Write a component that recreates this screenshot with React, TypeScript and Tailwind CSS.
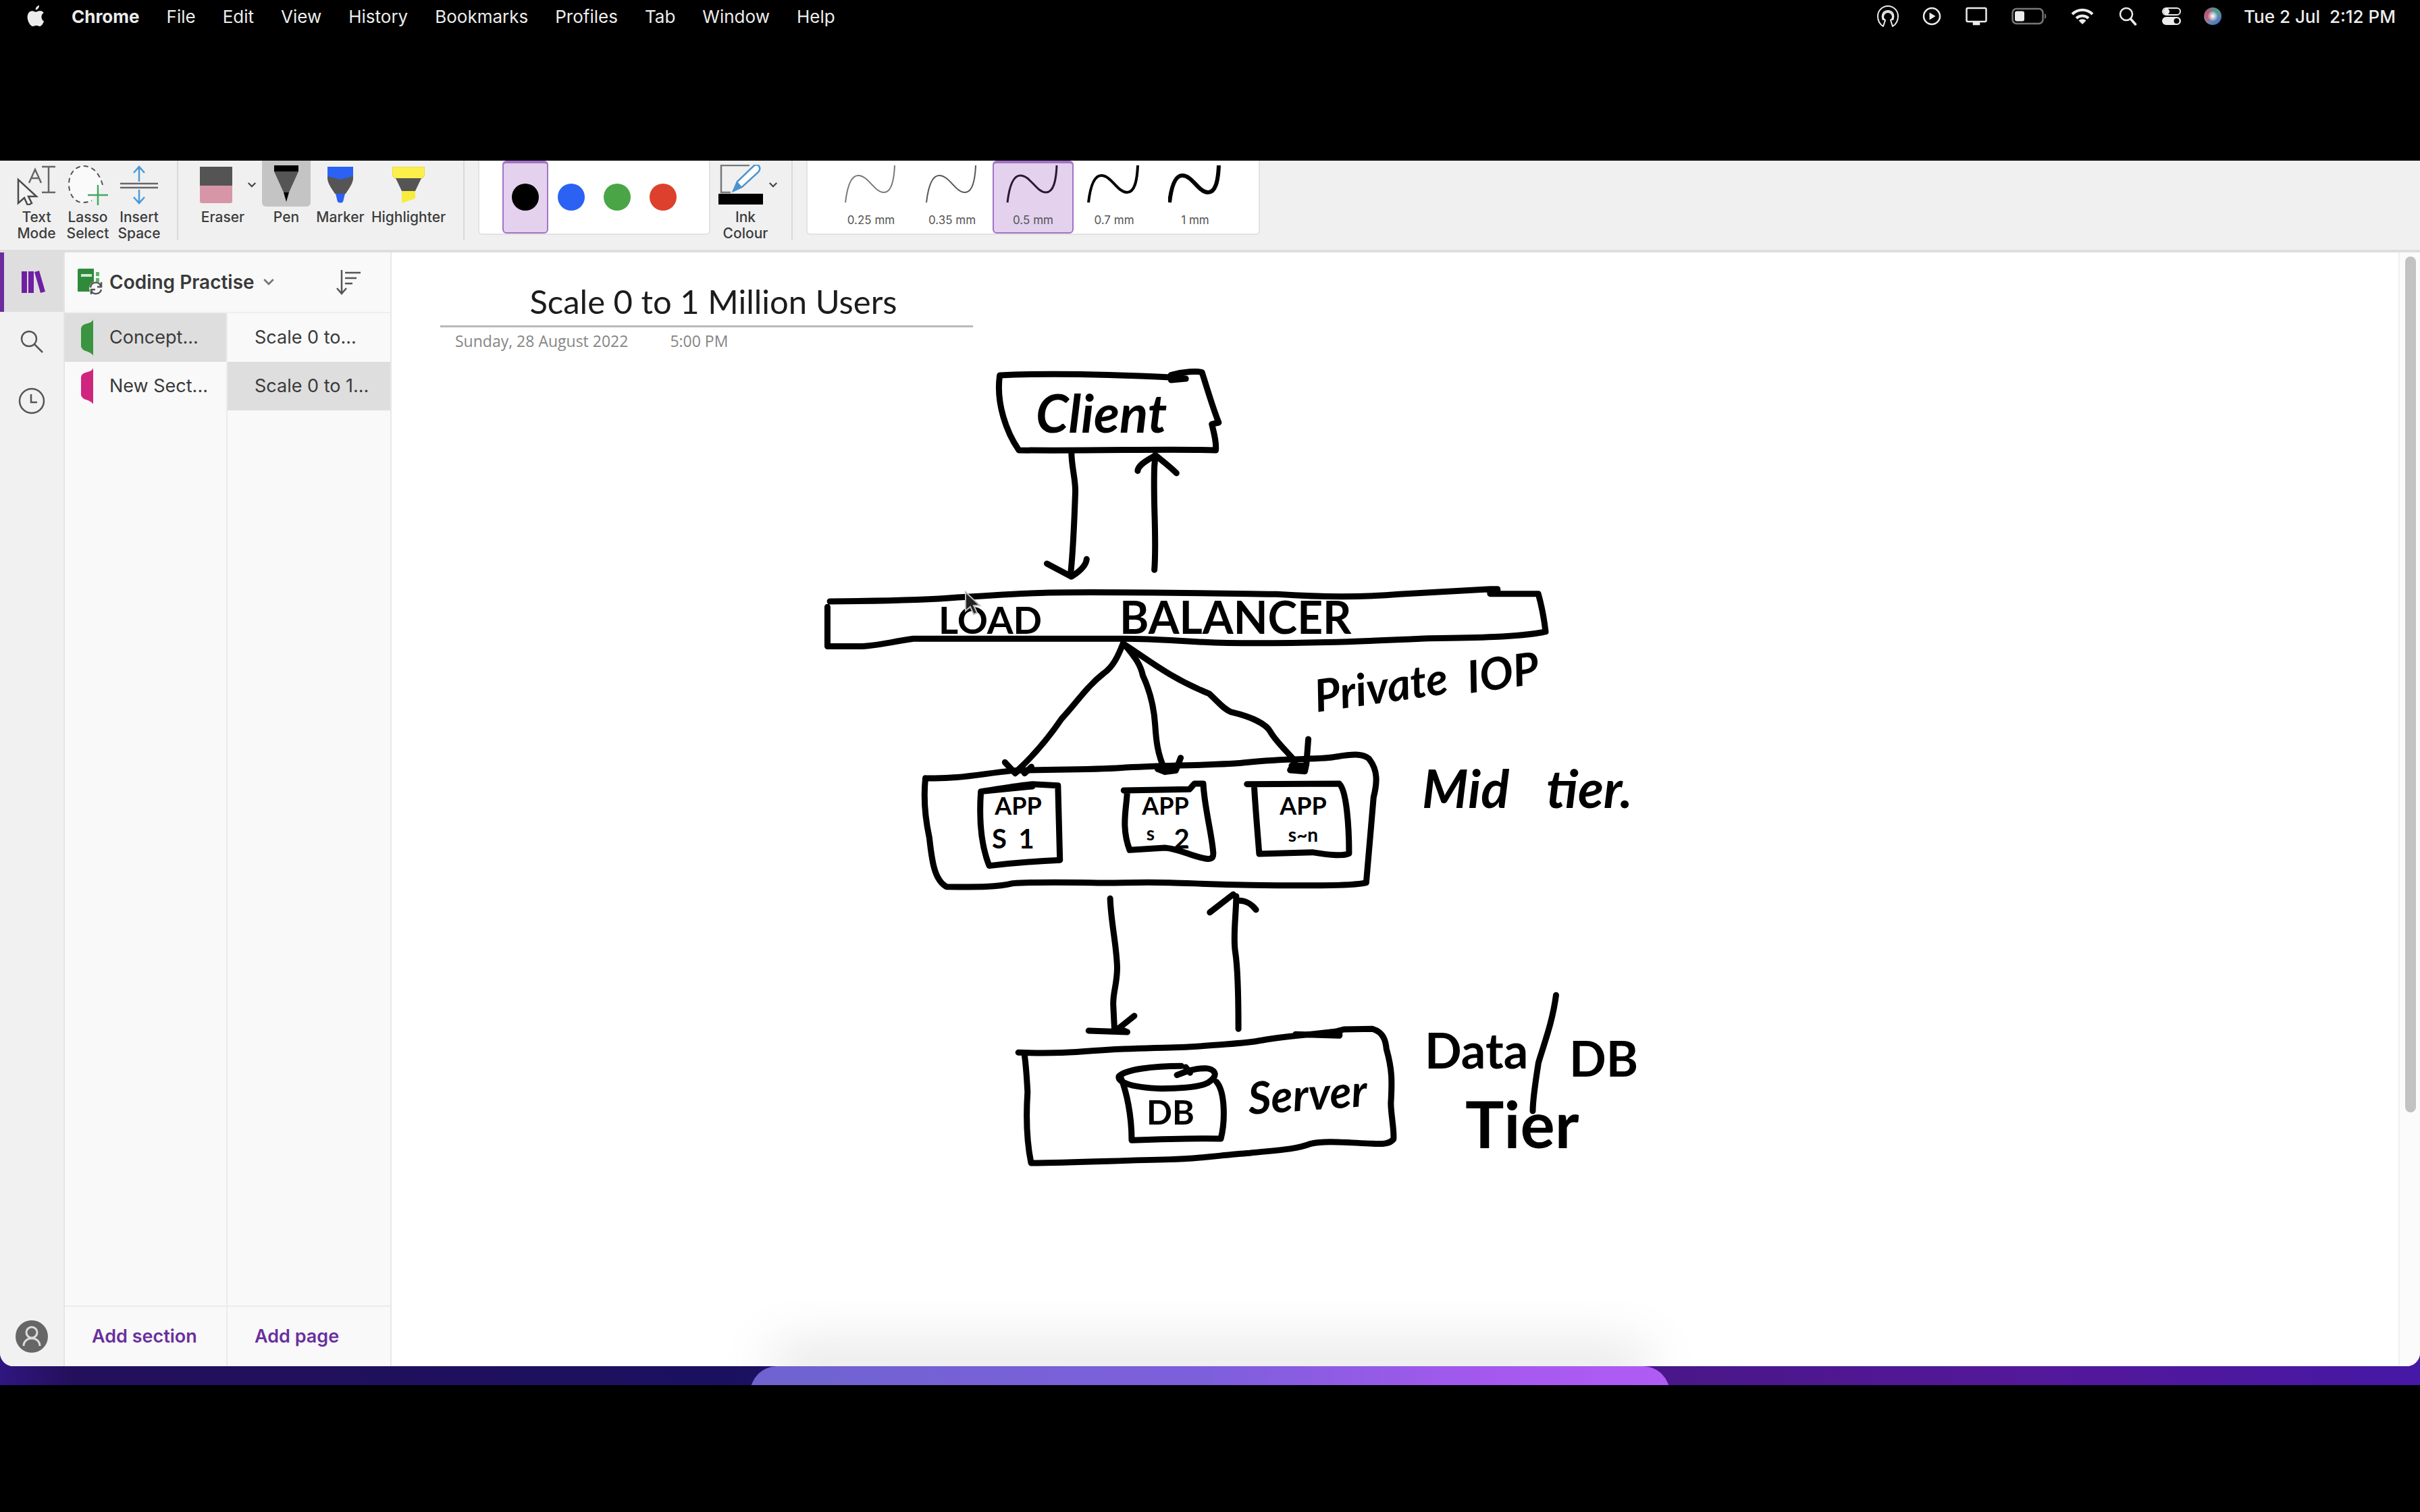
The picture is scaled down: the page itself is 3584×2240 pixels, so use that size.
import type { ReactNode } from "react";

const menus = ["File", "Edit", "View", "History", "Bookmarks", "Profiles", "Tab", "Window", "Help"];

const inkColours = [
  { name: "Black", className: "bg-black" },
  { name: "Blue", className: "bg-[#2b62f3]" },
  { name: "Green", className: "bg-[#49a546]" },
  { name: "Red", className: "bg-[#dd402c]" },
];

const nibs = [
  { label: "0.25 mm", weight: 2, colour: "#777" },
  { label: "0.35 mm", weight: 2, colour: "#555" },
  { label: "0.5 mm", weight: 3, colour: "#2a1a33" },
  { label: "0.7 mm", weight: 4, colour: "#000" },
  { label: "1 mm", weight: 6, colour: "#000" },
];

const sections = [
  { label: "Concept...", fill: "#3a9440", selected: true },
  { label: "New Sect...", fill: "#d0257f", selected: false },
];

const pages = [
  { label: "Scale 0 to...", selected: false },
  { label: "Scale 0 to 1...", selected: true },
];

function AppleLogo() {
  return (
    <svg viewBox="0 0 26 32" className="h-8 w-[26px]" fill="#ececec" aria-hidden="true">
      <path d="M18 0c.3 3-2.400 6.600-5.300 6.600C12.300 3.600 15.200.4 18 0z" />
      <path d="M25 23.500c-1.400 3.700-3.600 7.500-6.200 7.500-1.900 0-2.700-1.200-5-1.200s-3.200 1.200-5 1.200C5.200 31 .6 23.800.6 17.200c0-5.800 3.600-9 7.200-9 2.200 0 4 1.500 5.500 1.500 1.400 0 3.500-1.600 6.200-1.600 1.700 0 3.900.9 5.200 2.800-4.800 2.900-3.900 10.300.3 12.600z" />
    </svg>
  );
}

function MenuBar() {
  return (
    <header className="flex h-12 items-center justify-between pl-10 pr-9 text-[26px] text-[#ececec]">
      <nav className="flex items-center gap-10" aria-label="Menu bar">
        <button aria-label="Apple menu"><AppleLogo /></button>
        <button className="font-bold">Chrome</button>
        {menus.map((m) => (
          <button key={m}>{m}</button>
        ))}
      </nav>
      <div className="flex items-center">
        <button aria-label="Hotspot" className="mr-[34px]">
          <svg viewBox="0 0 34 34" className="size-[34px]" fill="none" stroke="#ececec" strokeWidth="2" strokeLinejoin="round">
            <path d="M10 32C5 29 2 24 2 17a15 15 0 0 1 30 0c0 7-3 12-8 15l-3-9c2-1 3-3 3-5a7 7 0 0 0-14 0c0 2 1 4 3 5z" />
            <path d="M10 23C6 13 12 9 17 9s11 4 7 14" />
          </svg>
        </button>
        <button aria-label="Now playing" className="mr-9">
          <svg viewBox="0 0 28 28" className="size-7" fill="none" stroke="#ececec" strokeWidth="2.500">
            <circle cx="14" cy="14" r="12" />
            <path d="M10.500 8.500v11l9-5.500z" fill="#ececec" stroke="none" />
          </svg>
        </button>
        <button aria-label="Display" className="mr-9">
          <svg viewBox="0 0 32 28" className="h-7 w-8" fill="none" stroke="#ececec" strokeWidth="2.500">
            <rect x="1.500" y="2" width="29" height="20" rx="2" />
            <path d="M12 23h8v3h-8z" fill="#ececec" />
          </svg>
        </button>
        <button aria-label="Battery" className="mr-9">
          <svg viewBox="0 0 52 28" className="h-7 w-[52px]" fill="none">
            <rect x="1.500" y="3" width="45" height="22" rx="6" stroke="#777" strokeWidth="2.500" />
            <rect x="5" y="6.500" width="14" height="15" rx="3" fill="#ececec" />
            <path d="M49 10c3 1 3 7 0 8z" fill="#777" />
          </svg>
        </button>
        <button aria-label="Wi-Fi" className="mr-9">
          <svg viewBox="0 0 34 26" className="h-[26px] w-[34px]" fill="none" stroke="#ececec" strokeWidth="4">
            <path d="M2 10a21 21 0 0 1 30 0" />
            <path d="M8 16a13 13 0 0 1 18 0" />
            <path d="M11.500 19.500a8 8 0 0 1 11 0L17 25z" fill="#ececec" stroke="none" />
          </svg>
        </button>
        <button aria-label="Spotlight" className="mr-9">
          <svg viewBox="0 0 28 28" className="size-7" fill="none" stroke="#ececec" strokeWidth="2.500" strokeLinecap="round">
            <circle cx="12" cy="11" r="9" />
            <path d="M18.500 18l7 8" strokeWidth="3.500" />
          </svg>
        </button>
        <button aria-label="Control centre" className="mr-8">
          <svg viewBox="0 0 30 28" className="h-7 w-[30px]" fill="none" stroke="#ececec" strokeWidth="2">
            <rect x="2" y="2" width="26" height="10" rx="5" />
            <circle cx="7.500" cy="7" r="3.500" fill="#ececec" />
            <rect x="2" y="16" width="26" height="10" rx="5" fill="#ececec" />
            <circle cx="22.500" cy="21" r="4" fill="#000" stroke="none" />
          </svg>
        </button>
        <button aria-label="Siri" className="mr-8">
          <svg viewBox="0 0 28 28" className="size-7">
            <defs>
              <linearGradient id="siriBase" x1="0" y1="0" x2="1" y2="1">
                <stop offset="0" stopColor="#a8435e" />
                <stop offset="0.450" stopColor="#7f8fa0" />
                <stop offset="1" stopColor="#2e6fd2" />
              </linearGradient>
              <radialGradient id="siriGlow">
                <stop offset="0" stopColor="#fff" />
                <stop offset="1" stopColor="#fff" stopOpacity="0" />
              </radialGradient>
            </defs>
            <circle cx="14" cy="14" r="13" fill="url(#siriBase)" />
            <path d="M12 2c8-1 14 6 13 11-5-2-9-5-13-11z" fill="#3fa08a" />
            <path d="M3 10c4-4 8-2 9 4s-3 8-7 7z" fill="#d8496f" opacity="0.700" />
            <circle cx="14" cy="14" r="8" fill="url(#siriGlow)" />
          </svg>
        </button>
        <time className="whitespace-pre font-medium">Tue 2 Jul  2:12 PM</time>
      </div>
    </header>
  );
}

function Chevron({ className }: { className: string }) {
  return (
    <svg viewBox="0 0 16 10" className={className} fill="none" stroke="currentColor" strokeWidth="2.500">
      <path d="M2 1.500l6 6 6-6" />
    </svg>
  );
}

function Tool({ label, icon, className = "" }: { label: string; icon: ReactNode; className?: string }) {
  return (
    <button className={`flex flex-col items-center ${className}`}>
      <span className="flex h-[72px] items-center justify-center">{icon}</span>
      <span className="text-[21px] font-medium leading-6 text-[#3c3c3c]">{label}</span>
    </button>
  );
}

const Divider = () => <div className="h-[118px] w-[2px] shrink-0 bg-[#dadada]" />;

function Toolbar() {
  return (
    <div role="toolbar" aria-label="Draw" className="flex h-[136px] shrink-0 items-start border-b-4 border-[#dedede] bg-[#f0f0f0]">
      <div className="flex gap-3 pl-[22px] pr-6">
        <Tool
          label="Text Mode"
          className="w-[64px]"
          icon={
            <svg viewBox="0 0 60 60" className="size-[60px]" fill="none" stroke="#4a4a4a" strokeWidth="2.500">
              <path d="M38 3h20M48 3v38M38 41h20M19 27L28 7l9 20M22 20h12" stroke="#666" />
              <path d="M3 22v35l9-8 5 11 6-3-5-10h12z" fill="#f4f4f4" />
            </svg>
          }
        />
        <Tool
          label="Lasso Select"
          className="w-[64px]"
          icon={
            <svg viewBox="0 0 62 64" className="h-16 w-[62px]" fill="none">
              <path d="M53 32C48 14 38 4 25 4 12 4 3 16 3 31s9 27 20 27c6 0 10-1 14-3" fill="#fafafa" stroke="#555" strokeWidth="2" strokeDasharray="7 5" />
              <path d="M46 32v30M31 47h30" stroke="#46a862" strokeWidth="2.500" />
            </svg>
          }
        />
        <Tool
          label="Insert Space"
          className="w-[64px]"
          icon={
            <svg viewBox="0 0 56 60" className="h-[60px] w-14" fill="none" strokeWidth="2.500">
              <path d="M0 28h56M0 34h56" stroke="#666" />
              <path d="M28 25V3M20 12l8-9 8 9M28 37v20M20 48l8 9 8-9" stroke="#4b9bd8" />
            </svg>
          }
        />
      </div>
      <Divider />
      <div className="flex items-start pl-8 pr-6">
        <button className="flex w-[84px] flex-col">
          <span className="flex h-[72px] w-full items-center justify-between">
            <svg viewBox="0 0 48 54" className="h-[54px] w-12">
              <path d="M0 0h48v30H0z" fill="#545454" />
              <path d="M0 28h48v23q0 3-3 3H3q-3 0-3-3z" fill="#d796a8" />
            </svg>
            <Chevron className="h-3 w-[14px] text-[#444]" />
          </span>
          <span className="w-[68px] text-center text-[21px] font-medium leading-6 text-[#3c3c3c]">Eraser</span>
        </button>
        <Tool
          label="Pen"
          className="ml-2 w-[72px]"
          icon={
            <span className="mb-1 flex h-[68px] w-[72px] items-center justify-center rounded-b-md bg-[#c4c4c4]">
              <svg viewBox="0 0 36 54" className="h-[54px] w-9">
                <path d="M0 0h36v9H0z" />
                <path d="M0 9h36L22 40h-8z" fill="#555" />
                <path d="M14 40h8l-4 14z" />
              </svg>
            </span>
          }
        />
        <Tool
          label="Marker"
          className="w-[88px]"
          icon={
            <svg viewBox="0 0 38 54" className="h-[54px] w-[38px]">
              <path d="M0 0h38v13L37 20H1L0 13z" fill="#2b62f3" />
              <path d="M0 14l19 5 19-5c1 10-6 18-11 26H11C6 32-1 24 0 14z" fill="#555" />
              <path d="M12 40h14l-3 12q-4 3-8 0z" fill="#2b62f3" />
            </svg>
          }
        />
        <Tool
          label="Highlighter"
          className="w-[114px]"
          icon={
            <svg viewBox="0 0 48 54" className="h-[54px] w-12">
              <path d="M0 0h48v13l-5 5H5L0 13z" fill="#fbf04b" stroke="#d9cc3a" />
              <path d="M5 17h38L34 36H14z" fill="#555" />
              <path d="M14 36h20v11l-20 7z" fill="#f7ec3e" />
            </svg>
          }
        />
      </div>
      <Divider />
      <div role="group" aria-label="Pen colours" className="ml-5 flex h-[110px] w-[344px] rounded-b-md border-2 border-t-0 border-[#e2e2e2] bg-white pl-[34px]">
        {inkColours.map((c, i) => (
          <button
            key={c.name}
            aria-label={c.name}
            aria-pressed={i === 0}
            className={`flex w-[68px] justify-center rounded-md border-2 border-t-4 pt-[30px] ${i === 0 ? "border-[#a274c4] bg-[#e3d1ee]" : "border-transparent"}`}
          >
            <span className={`size-10 rounded-full ${c.className}`} />
          </button>
        ))}
      </div>
      <button className="flex w-[104px] flex-col items-center">
        <span className="flex h-[72px] items-center gap-2 pl-2">
          <svg viewBox="0 0 66 60" className="h-[60px] w-[66px]" fill="none">
            <path d="M46 1H4v40h14" stroke="#777" strokeWidth="2.500" />
            <path d="M22 39l6-14L52 2q5-4 8 0 3 4-1 9L35 33z" fill="#fff" stroke="#4b93d0" strokeWidth="2.500" />
            <path d="M22 39l6-14 7 8z" fill="#4b93d0" />
            <path d="M0 43h66v16H0z" fill="#000" />
          </svg>
          <Chevron className="h-3 w-[14px] text-[#444]" />
        </span>
        <span className="w-20 text-center text-[21px] font-medium leading-6 text-[#3c3c3c]">Ink Colour</span>
      </button>
      <div className="ml-4"><Divider /></div>
      <div role="group" aria-label="Pen thickness" className="ml-5 flex h-[110px] rounded-b-md border-2 border-t-0 border-[#e2e2e2] bg-white px-[34px]">
        {nibs.map((n, i) => (
          <button
            key={n.label}
            aria-pressed={i === 2}
            className={`flex w-[120px] flex-col items-center gap-2 rounded-md border-2 border-t-4 ${i === 2 ? "border-[#a274c4] bg-[#e3d1ee]" : "border-transparent"}`}
          >
            <svg viewBox="0 0 80 60" className="h-[64px] w-[80px]" fill="none" stroke={n.colour} strokeWidth={n.weight}>
              <path d="M2 56C5 30 11 16 21 16c15 0 24 25 38 25 11 0 15-16 16-40" />
            </svg>
            <span className="text-[17px] leading-6 text-[#555]">{n.label}</span>
          </button>
        ))}
      </div>
    </div>
  );
}

function NavRail() {
  return (
    <nav aria-label="Views" className="flex w-24 shrink-0 flex-col border-r-2 border-[#e4e4e4] bg-[#f1f1f1] text-[#555]">
      <button aria-label="Notebooks" className="flex h-[88px] items-center border-l-[6px] border-[#6b2c9c] bg-[#dedede] pl-[26px]">
        <svg viewBox="0 0 36 34" className="h-[34px] w-9" fill="#6f1fa3">
          <path d="M0 1h8v32H0zM10 1h8v32h-8zM19 2l7-2 9 31-7 2z" />
        </svg>
      </button>
      <button aria-label="Search" className="flex h-[88px] items-center justify-center">
        <svg viewBox="0 0 34 34" className="size-[34px]" fill="none" stroke="currentColor" strokeWidth="2.500">
          <circle cx="13" cy="13" r="11" />
          <path d="M21 21l12 12" />
        </svg>
      </button>
      <button aria-label="Recent" className="flex h-[88px] items-center justify-center">
        <svg viewBox="0 0 40 40" className="size-10" fill="none" stroke="currentColor" strokeWidth="2.500">
          <circle cx="20" cy="20" r="18" />
          <path d="M19 10v12h9" />
        </svg>
      </button>
      <button aria-label="Account" className="mt-auto flex h-[88px] items-center justify-center">
        <svg viewBox="0 0 50 50" className="size-[50px]" fill="none" stroke="#dcdcdc" strokeWidth="3">
          <circle cx="25" cy="25" r="24" fill="#666" stroke="none" />
          <circle cx="25" cy="19" r="8" />
          <path d="M13 39c0-15 24-15 24 0" />
        </svg>
      </button>
    </nav>
  );
}

function NotebookPanel() {
  return (
    <aside className="flex w-[484px] shrink-0 flex-col border-r-2 border-[#e8e8e8] bg-[#f9f9f9] text-[27px] text-[#3a3a3a]">
      <div className="flex h-[90px] items-center border-b-2 border-[#efefef] pl-[18px] pr-11">
        <button className="flex items-center text-[28px] font-semibold">
          <svg viewBox="0 0 40 40" className="mr-2 size-10" fill="none">
            <path d="M1 2q0-2 2-2h22v34H1z" fill="#2f8a3c" />
            <path d="M6 8h16v4H6z" fill="#cfe9d2" />
            <path d="M28 5h5v6h-5zM28 14h5v6h-5z" fill="#5fb56a" />
            <circle cx="28" cy="29" r="10" fill="#f9f9f9" />
            <path d="M20 28c1-9 13-10 15-2m1-6v7h-6M36 31c-2 8-13 8-15 1m0 6v-7h6" stroke="#555" strokeWidth="2.500" />
          </svg>
          Coding Practise
          <Chevron className="ml-3 h-3 w-[18px] text-[#777]" />
        </button>
        <button aria-label="Sort pages" className="ml-auto">
          <svg viewBox="0 0 36 38" className="h-[38px] w-9" fill="none" stroke="#555" strokeWidth="2.500">
            <path d="M8 1v34M1 28l7 8 7-8M13 5h23M13 13h17M13 21h11" />
          </svg>
        </button>
      </div>
      <div className="grid flex-1 grid-cols-2">
        <div className="flex flex-col border-r-2 border-[#ececec]">
          {sections.map((s) => (
            <button key={s.label} className={`flex h-[72px] items-center pl-6 ${s.selected ? "bg-[#dedede]" : ""}`}>
              <svg viewBox="0 0 18 54" className="mr-6 h-[54px] w-[18px]" fill={s.fill}>
                <path d="M18 0v54q-1-3-8-6-10-3-10-8V14q0-6 10-8 7-2 8-6z" />
              </svg>
              {s.label}
            </button>
          ))}
          <button className="mt-auto flex h-[90px] items-center border-t-2 border-[#ececec] pl-10 font-semibold text-[#6a2f9e]">Add section</button>
        </div>
        <div className="flex flex-col">
          {pages.map((p) => (
            <button key={p.label} className={`flex h-[72px] items-center pl-10 ${p.selected ? "bg-[#dedede]" : ""}`}>{p.label}</button>
          ))}
          <button className="mt-auto flex h-[90px] items-center border-t-2 border-[#ececec] pl-10 font-semibold text-[#6a2f9e]">Add page</button>
        </div>
      </div>
    </aside>
  );
}

function Diagram() {
  return (
    <svg viewBox="1200 520 1300 1240" className="ml-[620px] h-[1240px] w-[1300px] shrink-0" role="img" aria-label="System diagram">
      <g fill="none" stroke="#000" strokeWidth="9" strokeLinecap="round" strokeLinejoin="round">
        {/* client box, request arrows and load balancer bar */}
        <g transform="translate(1200 530) scale(0.727 0.3333)">
          <path vectorEffect="non-scaling-stroke" d="M387 75C480 65 600 70 740 85L765 90 735 96 735 74C760 58 790 55 798 62 808 130 820 220 832 285L818 292C822 330 828 370 826 408 720 400 600 412 425 408 400 330 378 200 386 75" />
          <path vectorEffect="non-scaling-stroke" d="M532 415C532 480 540 530 540 590 538 720 536 850 530 965M482 912L532 970C550 945 562 920 563 892" />
          <path vectorEffect="non-scaling-stroke" d="M701 940C706 800 698 640 701 480L703 430M667 500C668 470 690 450 703 430 720 460 735 485 746 510" />
          <path vectorEffect="non-scaling-stroke" d="M40 1080C150 1078 230 1075 300 1062 400 1050 450 1040 520 1040 680 1038 850 1045 950 1048 1050 1062 1120 1062 1200 1048L1385 1025 1400 1025 1400 1046 1385 1046 1385 1030M1400 1046L1483 1046C1490 1100 1495 1160 1498 1215 1440 1240 1350 1242 1250 1245 1100 1260 1000 1268 850 1265 760 1260 720 1246 640 1246L210 1246C160 1262 130 1280 100 1280L35 1280 35 1105" />
        </g>
        {/* fan-out arrows and the application tier */}
        <g transform="translate(1340 940) scale(0.727 0.3333)">
          <path vectorEffect="non-scaling-stroke" d="M445 35C435 90 425 140 405 170 370 230 350 300 320 370 295 450 270 520 230 600M204 565L225 614 238 590 244 614 258 585" />
          <path vectorEffect="non-scaling-stroke" d="M445 35C470 100 480 130 485 180 500 250 508 330 510 400 512 470 515 530 530 600M515 595L530 608 552 602 562 545" />
          <path vectorEffect="non-scaling-stroke" d="M450 45C490 100 540 190 620 260 640 300 650 330 665 342 700 360 735 390 745 430 755 470 780 520 795 560L785 600 815 605 818 575 822 462M788 580L815 580" />
          <path vectorEffect="non-scaling-stroke" d="M42 635C110 640 150 618 220 602 330 595 400 598 450 588 560 575 640 580 700 565 780 545 850 555 880 540 920 525 935 530 945 548 965 600 962 660 955 720 950 850 945 970 940 1100 925 1108 900 1112 850 1112 700 1115 620 1105 540 1100 460 1095 430 1105 380 1100 320 1098 250 1098 220 1103 190 1120 150 1120 85 1118 60 1090 55 1000 50 900 40 800 38 720 42 635" />
          <path vectorEffect="non-scaling-stroke" d="M155 695C200 680 240 665 260 662L312 668 316 1000C260 1005 210 1015 172 1025 160 960 150 850 155 695L260 672" />
          <path vectorEffect="non-scaling-stroke" d="M446 690L580 685 590 660 608 660C610 760 625 880 628 960 630 990 625 1000 610 992 580 980 560 950 530 945L458 955C440 850 452 770 453 695" />
          <path vectorEffect="non-scaling-stroke" d="M697 662L885 660C900 690 905 850 905 970 890 985 860 975 830 965L722 972C718 860 714 760 712 680" />
        </g>
        {/* database tier */}
        <g transform="translate(1460 1300) scale(0.6506 0.3333)">
          <path vectorEffect="non-scaling-stroke" d="M283 90C285 200 298 300 299 400 298 480 290 500 290 560L293 680M234 678L322 684 302 668 338 612" />
          <path vectorEffect="non-scaling-stroke" d="M575 670C575 560 575 420 568 330 562 260 570 160 570 80M510 152L563 72M575 100C590 98 605 115 615 140" />
          <path vectorEffect="non-scaling-stroke" d="M74 775C200 785 250 760 330 758 420 752 450 755 500 745 560 735 590 735 630 720 690 700 750 695 800 680L815 672 880 670C905 685 910 720 912 760 925 850 925 900 922 1000 922 1050 930 1120 928 1160 920 1180 905 1183 880 1180 820 1175 770 1165 740 1180 700 1210 650 1210 600 1222 540 1230 480 1248 420 1250 300 1255 200 1265 103 1266 95 1190 90 1100 95 950 93 880 92 840 88 785M705 694L805 700 805 680" />
          <path vectorEffect="non-scaling-stroke" d="M445 835C380 835 320 850 303 880 300 900 320 930 400 935 460 935 490 925 505 910 530 880 525 850 500 845 470 845 450 865 435 875M455 840L465 865M308 890C320 950 332 1050 332 1165 400 1160 470 1155 535 1158 545 1080 545 950 525 905" />
          <path vectorEffect="non-scaling-stroke" d="M1298 520C1290 640 1270 740 1258 820 1250 920 1245 980 1245 1035" />
        </g>
      </g>
      <g className="font-['Lato',sans-serif] font-bold" fill="#000">
        <text x="1534" y="640" className="text-[78px] italic">Client</text>
        <text x="1390" y="938" className="text-[56px]">LOAD</text>
        <text x="1658" y="938" className="text-[66px]">BALANCER</text>
        <text x="1950" y="1054" transform="rotate(-8 1950 1054)" className="text-[66px] italic">Private</text>
        <text x="2176" y="1026" transform="rotate(-8 2176 1026)" className="text-[66px] italic">IOP</text>
        <text x="2106" y="1196" className="text-[78px] italic">Mid</text>
        <text x="2290" y="1196" className="text-[78px] italic">tier.</text>
        <text x="1508" y="1206" textAnchor="middle" className="text-[36px]">APP</text>
        <text x="1480" y="1256" textAnchor="middle" className="text-[40px]">S</text>
        <text x="1520" y="1256" textAnchor="middle" className="text-[40px]">1</text>
        <text x="1726" y="1206" textAnchor="middle" className="text-[36px]">APP</text>
        <text x="1704" y="1244" textAnchor="middle" className="text-[28px]">s</text>
        <text x="1750" y="1256" textAnchor="middle" className="text-[40px]">2</text>
        <text x="1930" y="1206" textAnchor="middle" className="text-[36px]">APP</text>
        <text x="1930" y="1246" textAnchor="middle" className="text-[28px]">s~n</text>
        <text x="1698" y="1665" className="text-[50px]">DB</text>
        <text x="1850" y="1650" transform="rotate(-4 1850 1650)" className="text-[66px] italic">Server</text>
        <text x="2110" y="1582" className="text-[72px]">Data</text>
        <text x="2324" y="1594" className="text-[72px]">DB</text>
        <text x="2170" y="1700" className="text-[96px]">Tier</text>
      </g>
      <path d="M1430 876v28l7-6 5 11 5-2-5-11h9z" fill="#222" stroke="#bbb" strokeWidth="2" />
    </svg>
  );
}

export default function App() {
  return (
    <div className="flex min-h-screen flex-col bg-black pb-[188px] font-['Inter',sans-serif]">
      <MenuBar />
      <div className="mt-[190px] flex flex-1 flex-col bg-[linear-gradient(90deg,#2f1680_0%,#23105c_3%,#1b1060_30%,#4a178a_70%,#54189a_84%,#4518a5_100%)]">
        <div className="relative flex flex-1 flex-col overflow-hidden rounded-b-[20px] bg-white">
          <Toolbar />
          <div className="flex flex-1">
            <NavRail />
            <NotebookPanel />
            <main className="flex min-w-0 flex-1 flex-col font-['Open_Sans',sans-serif]">
              <div className="ml-[72px] w-[789px] pt-10">
                <h1 className="border-b-[3px] border-[#b9b9b9] pb-1 pl-5 text-center font-['Lato',sans-serif] text-[49px] leading-[64px] text-[#1c1c1c]">Scale 0 to 1 Million Users</h1>
                <p className="flex gap-[62px] pl-[22px] pt-1 text-[23px] leading-8 text-[#858585]">
                  <span>Sunday, 28 August 2022</span>
                  <span>5:00 PM</span>
                </p>
              </div>
              <Diagram />
            </main>
            <div className="w-8 shrink-0 border-l-2 border-[#f0f0f0] bg-[#fbfbfb] pl-2 pt-[6px]">
              <div className="h-[1268px] w-4 rounded-full bg-[#c2c2c2]" />
            </div>
          </div>
          <div className="pointer-events-none absolute -bottom-5 left-[32%] right-[32%] h-10 bg-[#777] opacity-30 blur-2xl" />
        </div>
        <div className="flex h-7 shrink-0 justify-center overflow-hidden">
          <div className="h-20 w-[38%] rounded-[44px] bg-[linear-gradient(90deg,#6f63d0,#7d5fdc_50%,#a458ee_80%,#b05cf5)]" />
        </div>
      </div>
    </div>
  );
}
